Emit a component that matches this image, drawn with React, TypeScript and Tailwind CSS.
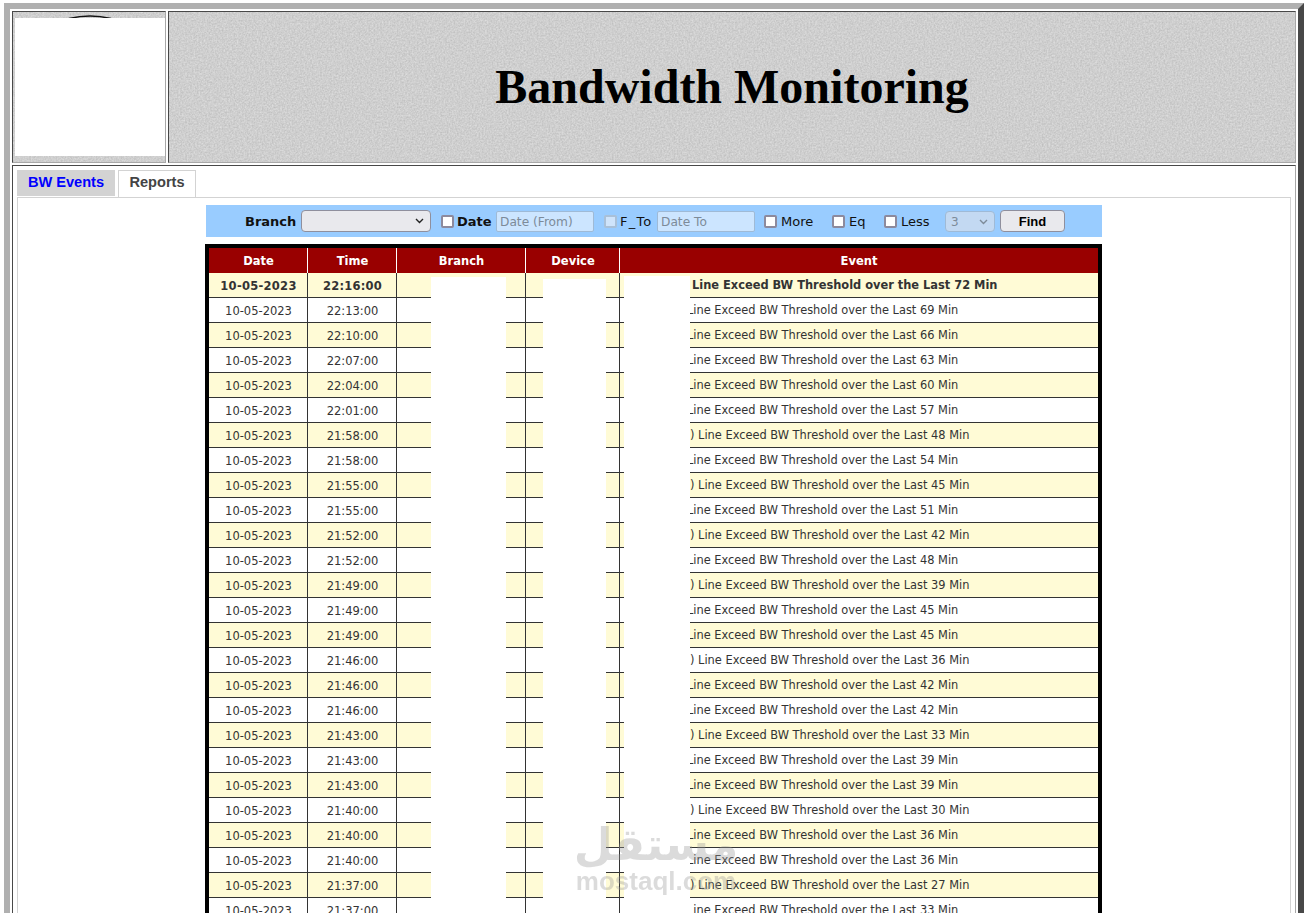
import React from "react";

const base: [string, number, boolean][] = [
  ["22:13:00", 69, false], ["22:10:00", 66, false], ["22:07:00", 63, false], ["22:04:00", 60, false],
  ["22:01:00", 57, false], ["21:58:00", 48, true], ["21:58:00", 54, false], ["21:55:00", 45, true],
  ["21:55:00", 51, false], ["21:52:00", 42, true], ["21:52:00", 48, false], ["21:49:00", 39, true],
  ["21:49:00", 45, false], ["21:49:00", 45, false], ["21:46:00", 36, true], ["21:46:00", 42, false],
  ["21:46:00", 42, false], ["21:43:00", 33, true], ["21:43:00", 39, false], ["21:43:00", 39, false],
  ["21:40:00", 30, true], ["21:40:00", 36, false], ["21:40:00", 36, false], ["21:37:00", 27, true],
  ["21:37:00", 33, false],
];

function Noise({ id }: { id: string }) {
  return (
    <svg className="absolute inset-0 w-full h-full" aria-hidden="true">
      <filter id={id} x="0" y="0" width="100%" height="100%" colorInterpolationFilters="sRGB">
        <feTurbulence type="fractalNoise" baseFrequency="0.6" numOctaves={2} seed={4} />
        <feColorMatrix type="matrix" values="0.17 0 0 0 0.725 0.17 0 0 0 0.725 0.17 0 0 0 0.725 0 0 0 0 1" />
      </filter>
      <rect width="100%" height="100%" filter={`url(#${id})`} />
    </svg>
  );
}

function Check({ disabled }: { disabled?: boolean }) {
  return (
    <input
      type="checkbox"
      disabled={disabled}
      className={
        disabled
          ? "block appearance-none w-[13px] h-[13px] shrink-0 rounded-[2px] border-2 border-[#a9c0d8] bg-[#cfe4fb]"
          : "block appearance-none w-[13px] h-[13px] shrink-0 rounded-[2px] border-2 border-[#8d8a9d] bg-white"
      }
    />
  );
}

function Chevron({ color }: { color: string }) {
  return (
    <svg className="absolute right-[7px] top-[8px] w-[9px] h-[6px] pointer-events-none" viewBox="0 0 9 6" aria-hidden="true">
      <path d="M1 1L4.5 4.5L8 1" fill="none" stroke={color} strokeWidth="1.4" />
    </svg>
  );
}

const td = "border-b border-r border-[#333333] text-center pt-[3px] pl-[1px]";
const ev = "border-b border-[#333333] whitespace-nowrap overflow-hidden pt-[2px]";
const th = "border-r border-white pt-[3px] pl-[1px]";

export default function App() {
  return (
    <div className="h-[913px] overflow-hidden bg-white font-['DejaVu_Sans',sans-serif] pt-[3px] pl-[4px] pr-[7px]">
      <div className="h-[1000px] border-[6px] border-t-[#b0b0b0] border-l-[#b0b0b0] border-r-[#484848] border-b-[#484848] bg-white p-[2px] flex flex-col gap-[2px]">
        <div className="flex gap-[2px] h-[152px] shrink-0">
          <div className="relative w-[154px] shrink-0 border border-t-[#484848] border-l-[#484848] border-r-[#a8a8a8] border-b-[#a8a8a8] pl-[2px] pt-[6px]">
            <Noise id="n1" />
            <svg className="absolute left-[55px] top-[2px] w-[44px] h-[5px]" viewBox="0 0 44 5" aria-hidden="true">
              <path d="M1 4.5Q22 -0.5 43 4.5" fill="none" stroke="#111111" strokeWidth="1.6" />
            </svg>
            <div className="relative w-[150px] h-[138px] bg-white" />
          </div>
          <div className="relative flex-1 border border-t-[#484848] border-l-[#484848] border-r-[#a8a8a8] border-b-[#a8a8a8] flex items-center justify-center">
            <Noise id="n2" />
            <h1 className="relative font-['Liberation_Serif',serif] font-bold text-[48px] leading-none text-black">Bandwidth Monitoring</h1>
          </div>
        </div>

        <div className="flex-1 border border-t-[#484848] border-l-[#484848] border-r-[#a8a8a8] border-b-[#a8a8a8] px-[4px] pt-[4px]">
          <div className="flex items-end gap-[3px] h-[27px] font-['Liberation_Sans',sans-serif] font-bold text-[14.6px]">
            <div className="w-[98px] h-[26px] mb-[1px] pb-[1px] bg-[#d3d3d3] text-[#0000ff] flex items-center justify-center">BW Events</div>
            <div className="w-[78px] h-[27px] pb-[2px] border border-b-0 border-[#d3d3d3] text-[#444444] flex items-center justify-center">Reports</div>
          </div>
          <div className="border border-[#d3d3d3] h-[800px] pt-[7px]">
            <div className="w-[897px] ml-[187px]">
              <form className="ml-[1px] h-[32px] bg-[#99ccff] text-[13px] text-[#111111] flex items-center pl-[39px]">
                <span className="font-bold w-[56px] pt-[2px]">Branch</span>
                <div className="relative w-[130px] h-[22px]">
                  <select className="block appearance-none w-full h-full rounded-[4px] border border-[#8f8f9d] bg-[#e9e9ed]">
                    <option></option>
                  </select>
                  <Chevron color="#222222" />
                </div>
                <span className="ml-[10px]"><Check /></span>
                <span className="font-bold ml-[3px] w-[39px] pt-[2px]">Date</span>
                <input placeholder="Date (From)" className="w-[98px] h-[21px] px-[3px] pt-[1px] rounded-[2px] border border-[#9fbad6] bg-[#cce5ff] text-[12.2px] placeholder:text-[#7d8b99]" />
                <span className="ml-[10px]"><Check disabled /></span>
                <span className="ml-[3px] w-[37px] pt-[2px] tracking-[1.2px]">F_To</span>
                <input placeholder="Date To" className="w-[98px] h-[21px] px-[3px] pt-[1px] rounded-[2px] border border-[#9fbad6] bg-[#cce5ff] text-[12.2px] placeholder:text-[#7d8b99]" />
                <span className="ml-[9px]"><Check /></span>
                <span className="ml-[4px] w-[51px] pt-[2px]">More</span>
                <Check />
                <span className="ml-[4px] w-[35px] pt-[2px]">Eq</span>
                <Check />
                <span className="ml-[4px] w-[44px] pt-[2px]">Less</span>
                <div className="relative w-[50px] h-[21px]">
                  <select disabled className="block appearance-none w-full h-full rounded-[4px] border border-[#9fbad6] bg-[#c3d9f2] text-[12px] text-[#7d8b99] pl-[5px] pt-[1px]">
                    <option>3</option>
                  </select>
                  <Chevron color="#7d8b99" />
                </div>
                <button type="button" className="ml-[5px] w-[65px] h-[22px] pt-[1px] rounded-[4px] border border-[#8f8f9d] bg-[#e9e9ed] font-['Liberation_Sans',sans-serif] font-bold text-[13px] text-black">Find</button>
              </form>

              <div className="relative mt-[7px] border-[4px] border-black border-b-0 text-[12px]">
                <table className="w-[889px] table-fixed border-separate border-spacing-0 text-[#333333] text-[11.5px]">
                  <colgroup>
                    <col className="w-[99px]" />
                    <col className="w-[89px]" />
                    <col className="w-[129px]" />
                    <col className="w-[94px]" />
                    <col />
                  </colgroup>
                  <thead>
                    <tr className="h-[25px] bg-[#990000] text-white font-bold">
                      <th className={th}>Date</th>
                      <th className={th}>Time</th>
                      <th className={th}>Branch</th>
                      <th className={th}>Device</th>
                      <th className="pt-[3px]">Event</th>
                    </tr>
                  </thead>
                  <tbody>
                    <tr className="h-[25px] bg-[#fffbd6] font-bold">
                      <td className={td + " tracking-[0.28px]"}>10-05-2023</td>
                      <td className={td + " tracking-[0.25px]"}>22:16:00</td>
                      <td className={td}></td>
                      <td className={td}></td>
                      <td className={ev + " pl-[72px] text-[11.42px]"}>Line Exceed BW Threshold over the Last 72 Min</td>
                    </tr>
                    {base.map(([time, mins, paren], i) => (
                      <tr key={i} className={i % 2 === 0 ? "h-[25px] bg-white" : "h-[25px] bg-[#fffbd6]"}>
                        <td className={td}>10-05-2023</td>
                        <td className={td}>{time}</td>
                        <td className={td}></td>
                        <td className={td}></td>
                        <td className={paren ? ev + " pl-[70px] text-[11.4px]" : ev + " pl-[67px] text-[11.4px]"}>
                          {paren ? ") " : ""}Line Exceed BW Threshold over the Last {mins} Min
                        </td>
                      </tr>
                    ))}
                  </tbody>
                </table>
                <div className="absolute left-[222px] top-[29px] bottom-0 w-[75px] bg-white" />
                <div className="absolute left-[334px] top-[31px] bottom-0 w-[63px] bg-white" />
                <div className="absolute left-[415px] top-[28px] bottom-0 w-[66px] bg-white" />
              </div>
            </div>
          </div>
        </div>
      </div>

      <div className="absolute left-[576px] top-[819px] w-[160px] flex flex-col items-center text-[#9a9a9a] opacity-35 pointer-events-none font-bold">
        <span className="font-['DejaVu_Sans',sans-serif] text-[45px] leading-[52px]" dir="rtl">مستقل</span>
        <span className="-mt-[4px] font-['Liberation_Sans',sans-serif] text-[26px] leading-[28px]">mostaql.com</span>
      </div>
    </div>
  );
}
